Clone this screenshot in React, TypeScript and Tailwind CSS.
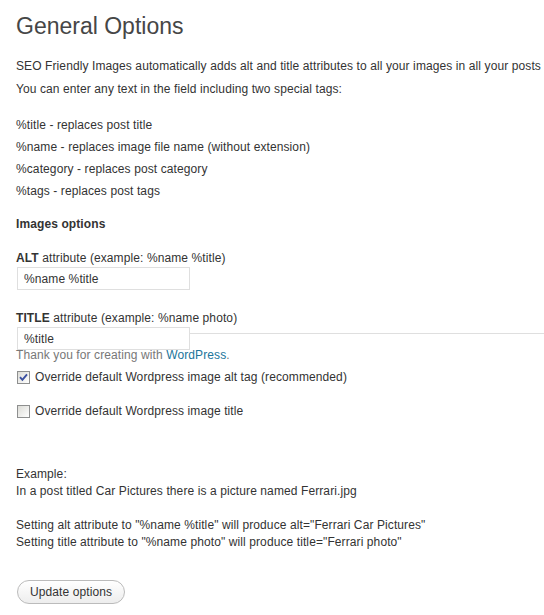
import React from "react";

const lines = [
  "%title - replaces post title",
  "%name - replaces image file name (without extension)",
  "%category - replaces post category",
  "%tags - replaces post tags",
];

function Checkbox({ checked }: { checked?: boolean }) {
  return (
    <span className="ml-[1px] flex h-[13px] w-[13px] shrink-0 items-center justify-center border border-[#8e8f8f] bg-gradient-to-br from-[#dcdcd7] to-[#ffffff]">
      {checked && (
        <svg width="9" height="9" viewBox="0 0 9 9">
          <path d="M1 4.2 L3.4 6.8 L8 1.4" fill="none" stroke="#3a4fa0" strokeWidth="1.9" />
        </svg>
      )}
    </span>
  );
}

export default function App() {
  return (
    <div className="relative min-h-[615px] w-[544px] overflow-hidden bg-white font-['Liberation_Sans',Arial,sans-serif] text-[12px] leading-[17px] tracking-[0.1px] text-[#333]">
      <div className="flex flex-col pl-[16px] pt-[12px]">
        {/* Heading */}
        <h2 className="text-[23px] leading-[29px] tracking-normal text-[#464646]">General Options</h2>

        <p className="mt-[17px] whitespace-nowrap">
          SEO Friendly Images automatically adds alt and title attributes to all your images in all your posts
        </p>
        <p className="mt-[6px]">You can enter any text in the field including two special tags:</p>

        <div className="mt-[19px] flex flex-col gap-[5px]">
          {lines.map((l) => (
            <p key={l}>{l}</p>
          ))}
        </div>

        <h3 className="mt-[16px] font-bold">Images options</h3>

        {/* Alt */}
        <label className="mt-[17px]">
          <b>ALT</b> attribute (example: %name %title)
        </label>
        <input
          readOnly
          value="%name %title"
          className="ml-[1px] mt-0 h-[23px] w-[173px] border border-[#dfdfdf] bg-white pl-[6px] text-[12px] text-[#333] outline-none"
        />

        {/* Title */}
        <label className="mt-[20px]">
          <b>TITLE</b> attribute (example: %name photo)
        </label>
        <input
          readOnly
          value="%title"
          className="relative z-10 ml-[1px] mt-0 h-[23px] w-[173px] border border-[#dfdfdf] bg-white pl-[6px] text-[12px] text-[#333] outline-none"
        />

        {/* Checkboxes */}
        <div className="mt-[19px] flex items-center gap-[5px]">
          <Checkbox checked />
          <span>Override default Wordpress image alt tag (recommended)</span>
        </div>
        <div className="mt-[17px] flex items-center gap-[5px]">
          <Checkbox />
          <span>Override default Wordpress image title</span>
        </div>

        {/* Example */}
        <div className="mt-[46px]">
          <p>Example:</p>
          <p>In a post titled Car Pictures there is a picture named Ferrari.jpg</p>
          <p className="mt-[17px]">Setting alt attribute to "%name %title" will produce alt="Ferrari Car Pictures"</p>
          <p>Setting title attribute to "%name photo" will produce title="Ferrari photo"</p>
        </div>

        <div className="mt-[29px]">
          <button className="ml-[1px] h-[24px] w-[108px] rounded-full border border-[#bbb] bg-gradient-to-b from-white to-[#ededed] text-[12px] text-[#333]">
            Update options
          </button>
        </div>
      </div>

      {/* WordPress footer overlapping the form */}
      <div className="absolute left-0 right-0 top-[333px]">
        <div className="ml-[100px] h-px bg-[#dfdfdf]" />
        <p className="relative z-20 pl-[16px] pt-[13px] text-[12px] text-[#777]">
          Thank you for creating with <span className="text-[#21759b]">WordPress</span>.
        </p>
      </div>
    </div>
  );
}
